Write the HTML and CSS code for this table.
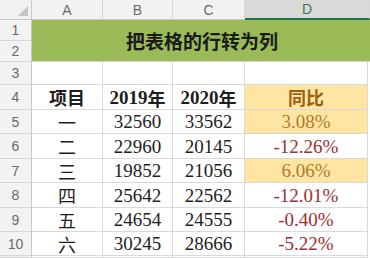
FILE: index.html
```html
<!DOCTYPE html>
<html lang="zh">
<head>
<meta charset="utf-8">
<link rel="stylesheet" href="styles.css">
</head>
<body>
<div class="sheet">
  <div class="corner"><span class="tri"></span></div>
  <div class="colhead">A</div>
  <div class="colhead">B</div>
  <div class="colhead">C</div>
  <div class="colhead sel">D</div>

  <div class="rowhead">1</div>
  <div class="title">把表格的行转为列</div>
  <div class="rowhead">2</div>

  <div class="rowhead">3</div>
  <div class="cell"></div><div class="cell"></div><div class="cell"></div><div class="cell last"></div>

  <div class="rowhead">4</div>
  <div class="cell hd cjk">项目</div>
  <div class="cell hd num">2019<span class="cjk">年</span></div>
  <div class="cell hd num">2020<span class="cjk">年</span></div>
  <div class="cell hd cjk gold last">同比</div>

  <div class="rowhead">5</div>
  <div class="cell cjk">一</div><div class="cell num">32560</div><div class="cell num">33562</div><div class="cell num gold pos last">3.08%</div>

  <div class="rowhead">6</div>
  <div class="cell cjk">二</div><div class="cell num">22960</div><div class="cell num">20145</div><div class="cell num neg last">-12.26%</div>

  <div class="rowhead">7</div>
  <div class="cell cjk">三</div><div class="cell num">19852</div><div class="cell num">21056</div><div class="cell num gold pos last">6.06%</div>

  <div class="rowhead">8</div>
  <div class="cell cjk">四</div><div class="cell num">25642</div><div class="cell num">22562</div><div class="cell num neg last">-12.01%</div>

  <div class="rowhead">9</div>
  <div class="cell cjk">五</div><div class="cell num">24654</div><div class="cell num">24555</div><div class="cell num neg last">-0.40%</div>

  <div class="rowhead">10</div>
  <div class="cell cjk">六</div><div class="cell num">30245</div><div class="cell num">28666</div><div class="cell num neg last">-5.22%</div>

  <div class="rowhead"></div>
  <div class="cell"></div><div class="cell"></div><div class="cell"></div><div class="cell last"></div>
</div>
</body>
</html>
```

FILE: styles.css
```css
html, body {
  margin: 0;
  padding: 0;
  background: #ffffff;
}
body {
  width: 370px;
  height: 258px;
  overflow: hidden;
}
.sheet {
  display: grid;
  grid-template-columns: 32px 71px 70px 72px 122px 3px;
  grid-template-rows: 20px 21px 21px 23px 25px 24px 25px 24px 25px 24px 24px 2px;
  width: 370px;
}
.corner {
  grid-column: 1;
  background: #f2f2f2;
  border-right: 1px solid #c8c8c8;
  border-bottom: 1px solid #c8c8c8;
  box-sizing: border-box;
  position: relative;
}
.tri {
  position: absolute;
  right: 3px;
  bottom: 3px;
  width: 0;
  height: 0;
  border-left: 10px solid transparent;
  border-bottom: 10px solid #c4c4c4;
}
.colhead {
  background: #f2f2f2;
  border-right: 1px solid #d6d6d6;
  border-bottom: 1px solid #c8c8c8;
  box-sizing: border-box;
  color: #6a6a6a;
  font-family: "Liberation Sans", Arial, sans-serif;
  font-size: 14px;
  display: flex;
  align-items: center;
  justify-content: center;
}
.colhead.sel {
  background: #d9d9d9;
  color: #3f7a4e;
  border-bottom: 2px solid #217346;
  grid-column: 5 / span 2;
}
.rowhead {
  grid-column: 1;
  background: #f2f2f2;
  border-right: 1px solid #c8c8c8;
  border-bottom: 1px solid #d6d6d6;
  box-sizing: border-box;
  color: #6a6a6a;
  font-family: "Liberation Sans", Arial, sans-serif;
  font-size: 14px;
  display: flex;
  align-items: center;
  justify-content: center;
}
.title {
  grid-column: 2 / span 5;
  grid-row: 2 / span 2;
  background: #9bbb59;
  border-bottom: 1px solid #d6d6d6;
  box-sizing: border-box;
  display: flex;
  align-items: center;
  justify-content: center;
  font-family: "Noto Sans CJK SC", sans-serif;
  font-weight: 700;
  font-size: 19px;
  color: #1a1a1a;
  padding-left: 2px;
}
.cell {
  border-right: 1px solid #d9d9d9;
  border-bottom: 1px solid #d9d9d9;
  box-sizing: border-box;
  display: flex;
  align-items: center;
  justify-content: center;
  color: #1e1e1e;
  font-size: 19px;
  white-space: nowrap;
}
.cell.last {
  grid-column: 5 / span 2;
  border-right: 1px solid #d9d9d9;
  margin-right: 2px;
}
.cjk {
  font-family: "Noto Sans CJK SC", sans-serif;
  font-size: 18px;
}
.num {
  font-family: "Liberation Serif", "Times New Roman", serif;
  font-size: 19px;
  padding-top: 1px;
}
.hd {
  font-weight: 700;
}
.hd .cjk {
  font-weight: 700;
}
.gold {
  background: #fee6a2;
  color: #9c5f14;
}
.pos {
  color: #b07a2e;
}
.neg {
  color: #993036;
}
```
